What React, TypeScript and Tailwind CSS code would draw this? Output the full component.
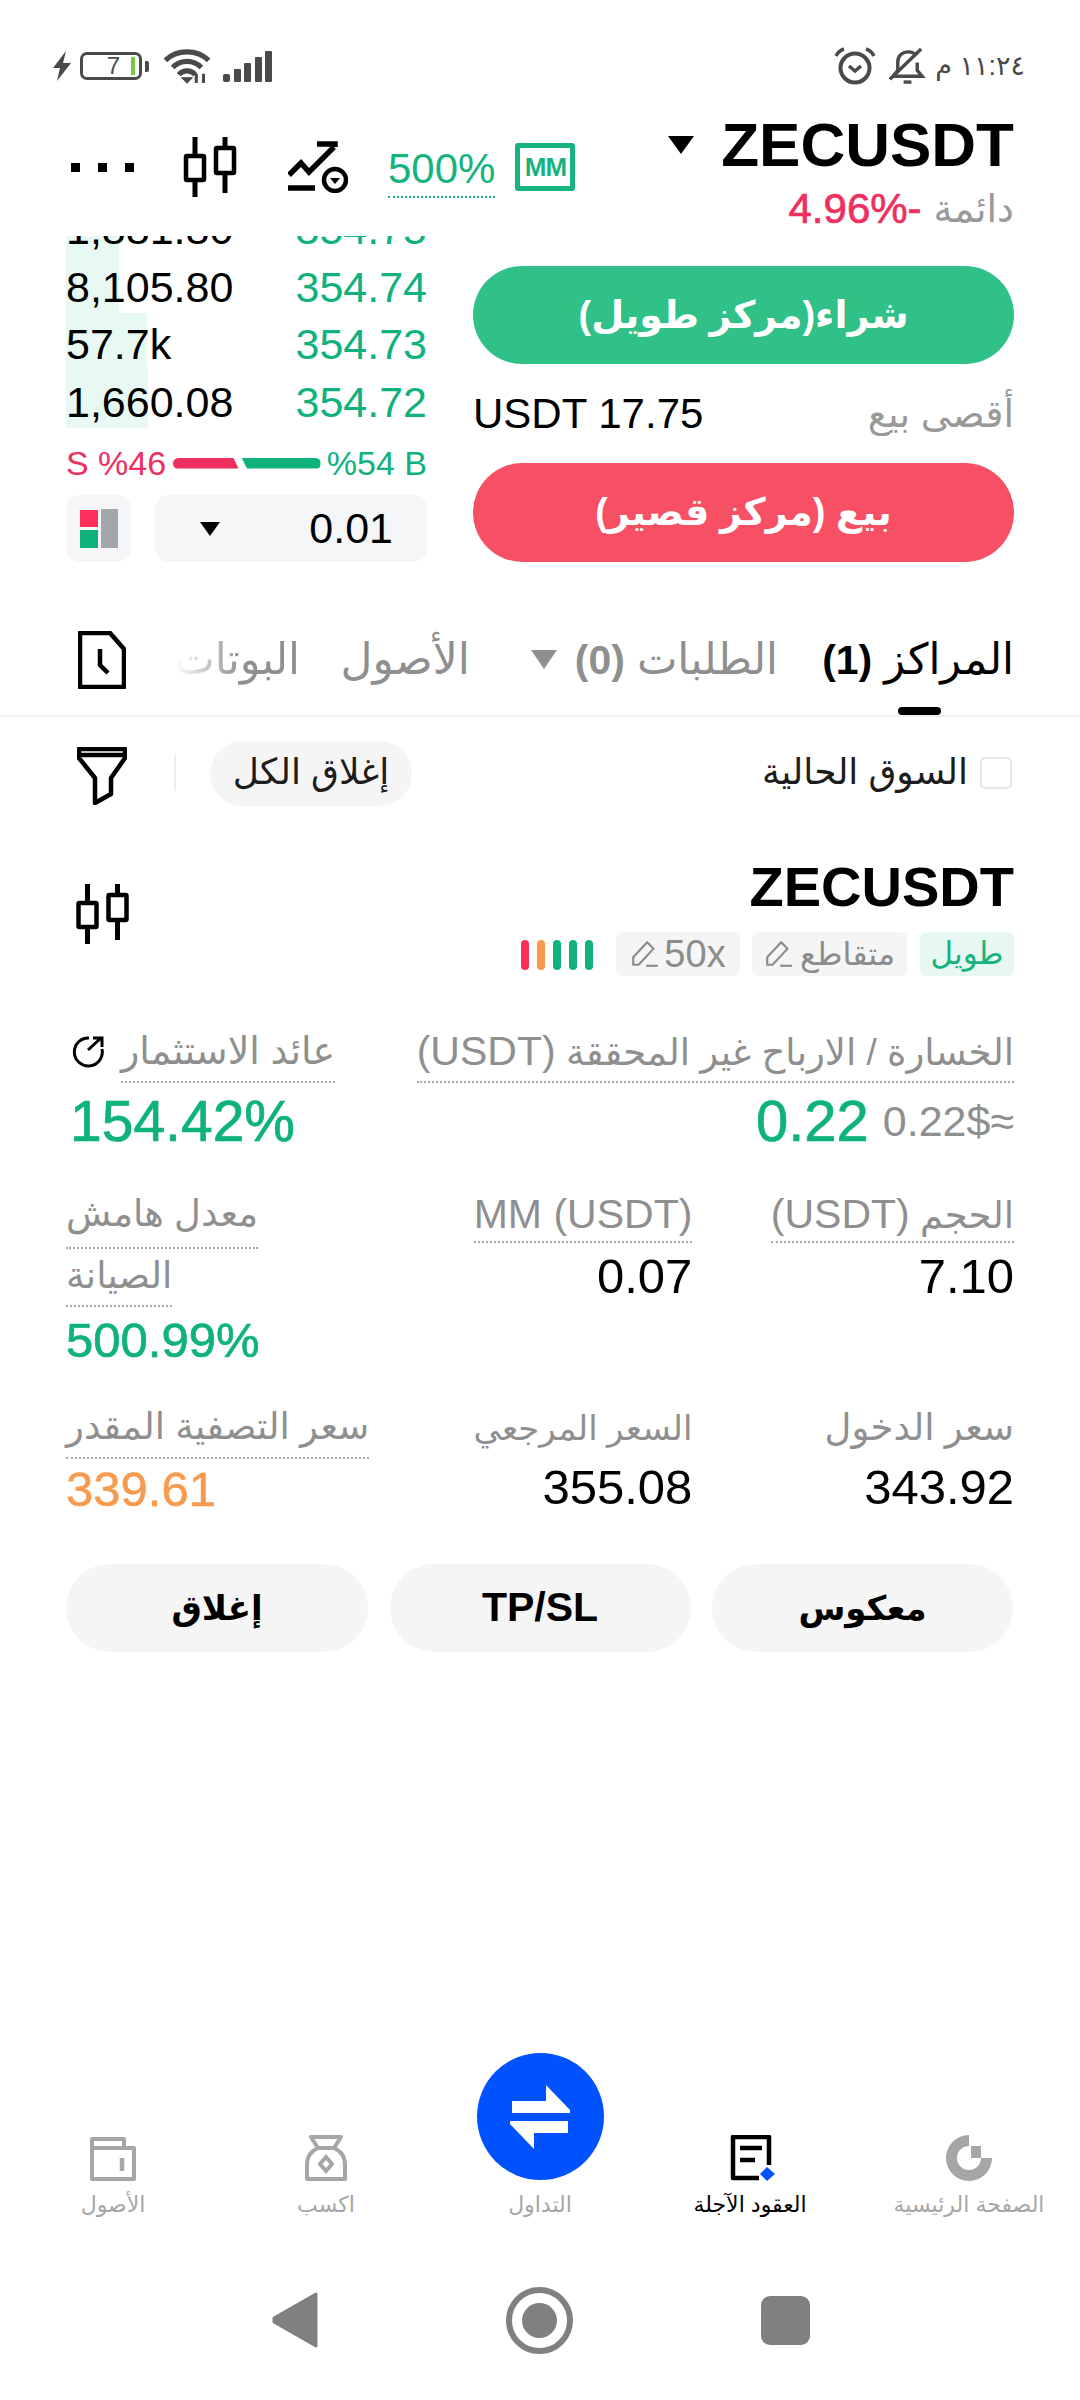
import React from "react";

const Candles = ({ className }: { className: string }) => (
  <svg viewBox="0 0 54 60" className={className} fill="none" stroke="#000" strokeWidth="4.5">
    <path d="M12 0V18M12 42V60M42 0V10M42 35V56" strokeWidth="5" />
    <rect x="3" y="19" width="18" height="24" rx="1" />
    <rect x="33" y="11" width="18" height="25" rx="1" />
  </svg>
);

const Tag = ({ children, className }: { children: React.ReactNode; className: string }) => (
  <div className={`h-[44px] rounded-[6px] flex items-center justify-center ${className}`}>{children}</div>
);

const Pen = () => (
  <svg viewBox="0 0 28 28" className="w-[30px] h-[30px]" fill="none" stroke="#8c8c8c" strokeWidth="2">
    <path d="M3 24V17L16 3L22 9L8 24H3Z" strokeLinejoin="round" />
    <path d="M15 25H26" />
  </svg>
);

const Label = ({ children, className = "" }: { children: React.ReactNode; className?: string }) => (
  <span className={`text-[37px] leading-none text-[#8f8f8f] border-b-2 border-dotted border-[#a8a8a8] whitespace-nowrap ${className}`}>
    {children}
  </span>
);

const Usdt = ({ text = "(USDT)" }: { text?: string }) => <span className="text-[41px] leading-none">{text}</span>;

const Book = ({ vol, price, bar }: { vol: string; price: string; bar: string }) => (
  <div className="relative h-[57.5px] flex items-center justify-between pt-[5px]">
    <div className={`absolute left-0 top-0 bottom-0 bg-[#e8f8f2] ${bar}`} />
    <span className="relative text-[43px] text-black">{vol}</span>
    <span className="relative text-[43px] text-[#0fb27c]">{price}</span>
  </div>
);

const NavItem = ({ label, width, icon, active }: { label: string; width: string; icon: React.ReactNode; active?: boolean }) => (
  <div className={`flex flex-col items-center shrink-0 ${width}`}>
    <div className="mb-[4px] flex">{icon}</div>
    <span className={`h-[43px] pb-[4px] flex items-center text-[22px] whitespace-nowrap ${active ? "text-black" : "text-[#a6a6a6]"}`}>{label}</span>
  </div>
);

export default function App() {
  return (
    <div className="w-[1080px] h-[2400px] bg-white flex flex-col overflow-hidden font-['Liberation_Sans','DejaVu_Sans',sans-serif]">
      {/* status bar */}
      <div className="h-[100px] pt-[32px] pl-[52px] pr-[55px] flex items-center justify-between">
        <div className="flex items-center">
          <svg viewBox="0 0 20 30" className="w-[20px] h-[30px]" fill="#4a4a4a"><path d="M14 0L1 17H8L5 30L19 12H11L14 0Z" /></svg>
          <div className="ml-[8px] w-[62px] h-[28px] rounded-[7px] border-[3px] border-[#4a4a4a] flex items-center justify-end pr-[4px] gap-[11px]">
            <span className="text-[24px] leading-none text-[#4a4a4a]">7</span>
            <span className="w-[4px] h-[18px] bg-[#7ac943]" />
          </div>
          <div className="ml-[3px] w-[4px] h-[11px] rounded-r-[2px] bg-[#4a4a4a]" />
          <svg viewBox="0 0 46 34" className="ml-[14px] w-[48px] h-[35px]" fill="none" stroke="#4a4a4a" strokeWidth="5">
            <path d="M2 11C13 0 33 0 44 11M9 18C17 10 29 10 37 18M15 25C19 20 27 20 31 25" />
            <path d="M23 33L18 28H28Z" fill="#4a4a4a" strokeWidth="1" />
            <path d="M32 24V33M39 24V33" strokeWidth="3" />
          </svg>
          <div className="ml-[12px] flex items-end gap-[3.5px] h-[32px]">
            <span className="w-[7px] h-[8px] bg-[#4a4a4a] rounded-[2px]" />
            <span className="w-[7px] h-[13px] bg-[#4a4a4a] rounded-[1px]" />
            <span className="w-[7px] h-[19px] bg-[#4a4a4a] rounded-[1px]" />
            <span className="w-[7px] h-[25px] bg-[#4a4a4a] rounded-[1px]" />
            <span className="w-[7px] h-[31px] bg-[#4a4a4a] rounded-[1px]" />
          </div>
        </div>
        <div className="flex items-center">
          <svg viewBox="0 0 42 38" className="w-[42px] h-[38px]" fill="none" stroke="#4a4a4a" strokeWidth="4">
            <circle cx="21" cy="21" r="14.5" />
            <path d="M15 19L21 24L27 19" strokeWidth="3.5" />
            <path d="M2 9C4 5 7 3 10 2M40 9C38 5 35 3 32 2" strokeWidth="3.5" />
          </svg>
          <svg viewBox="0 0 38 40" className="ml-[13px] w-[37px] h-[39px]" fill="none" stroke="#4a4a4a" strokeWidth="3.5">
            <path d="M4 30L9 24V15C9 9 14 5 20 5C23 5 26 6 28 9M29 16V24L34 30H4" />
            <path d="M1 33L33 2" />
            <path d="M15 36H23" strokeWidth="3.5" />
          </svg>
          <span dir="rtl" className="ml-[9px] text-[27px] leading-none text-[#4a4a4a] whitespace-nowrap">١١:٢٤ م</span>
        </div>
      </div>

      {/* market header */}
      <div className="h-[136px] pl-[71px] pr-[66px] flex justify-between">
        <div className="flex items-center h-[136px] pb-[2px]">
          <div className="flex gap-[18px] w-[112px]">
            <span className="w-[9px] h-[9px] bg-black" />
            <span className="w-[9px] h-[9px] bg-black" />
            <span className="w-[9px] h-[9px] bg-black" />
          </div>
          <Candles className="w-[54px] h-[60px]" />
          <svg viewBox="0 0 60 52" className="ml-[51px] w-[60px] h-[52px]" fill="none" stroke="#000" strokeWidth="5.5">
            <path d="M1 34L13 22L21 31L46 6M29 3H47V6" />
            <path d="M0 47H27" />
            <circle cx="47" cy="39" r="11" strokeWidth="4.5" />
            <path d="M42 37H52L47 43Z" fill="#000" stroke="none" />
          </svg>
          <span className="ml-[40px] text-[42px] leading-[46px] text-[#16b37e] border-b-2 border-dotted border-[#16b37e] pb-[4px] mt-[9px]">500%</span>
          <div className="ml-[20px] w-[60px] h-[48px] border-[5px] border-[#16b37e] rounded-[3px] flex items-center justify-center text-[26px] font-bold text-[#16b37e] leading-none tracking-[-1px]">
            MM
          </div>
        </div>
        <div className="flex flex-col items-end">
          <div className="flex items-center h-[68px] mt-[11px]">
            <span className="w-0 h-0 border-x-[13px] border-x-transparent border-t-[18px] border-t-black mr-[27px]" />
            <span className="text-[62px] leading-none font-bold text-black">ZECUSDT</span>
          </div>
          <div className="flex items-center h-[48px] mt-[6px]" dir="rtl">
            <span className="text-[38px] leading-none text-[#999]">دائمة</span>
            <span className="mr-[12px] text-[42px] leading-none text-[#ee2f5f] [-webkit-text-stroke:0.7px_#ee2f5f]" dir="ltr">4.96%-</span>
          </div>
        </div>
      </div>

      {/* order book and trade buttons */}
      <div className="h-[326px] px-[66px] flex justify-between">
        <div className="w-[361px] flex flex-col">
          <div className="h-[192px] overflow-hidden">
            <div className="-mt-[38px]">
              <Book vol="1,881.80" price="354.75" bar="w-[53px]" />
              <Book vol="8,105.80" price="354.74" bar="w-[53px]" />
              <Book vol="57.7k" price="354.73" bar="w-[81px]" />
              <Book vol="1,660.08" price="354.72" bar="w-[82px]" />
            </div>
          </div>
          <div className="mt-[17px] h-[36px] flex items-center justify-between">
            <span className="text-[34px] leading-none text-[#ee2f5f]">S %46</span>
            <div className="flex items-center">
              <span className="w-[66px] h-[11px] bg-[#ee2f5f] rounded-l-full [clip-path:polygon(0_0,92%_0,100%_100%,0_100%)]" />
              <span className="ml-[3px] w-[79px] h-[11px] bg-[#0fb27c] rounded-r-full [clip-path:polygon(0_0,100%_0,100%_100%,7%_100%)]" />
            </div>
            <span className="text-[34px] leading-none text-[#0fb27c]">%54 B</span>
          </div>
          <div className="mt-[14px] h-[67px] flex justify-between">
            <div className="w-[65px] h-[67px] rounded-[14px] bg-[#f5f6f7] flex items-center justify-center gap-[3px]">
              <div className="flex flex-col gap-[3px]">
                <span className="block w-[18px] h-[17px] bg-[#fb2f5a]" />
                <span className="block w-[18px] h-[18px] bg-[#0fb27c]" />
              </div>
              <span className="block w-[17px] h-[39px] bg-[#a3a6aa]" />
            </div>
            <div className="w-[272px] h-[67px] rounded-[14px] bg-[#f5f6f7] flex items-center justify-between pl-[45px] pr-[34px]">
              <span className="w-0 h-0 border-x-[10px] border-x-transparent border-t-[14px] border-t-black" />
              <span className="text-[43px] leading-none text-black">0.01</span>
            </div>
          </div>
        </div>
        <div className="w-[541px] flex flex-col pt-[30px]">
          <div dir="rtl" className="h-[98px] rounded-full bg-[#2fc187] flex items-center justify-center text-[38px] font-bold text-white">شراء(مركز طويل)</div>
          <div className="h-[99px] flex items-center justify-between">
            <span className="text-[42px] leading-none text-black">USDT 17.75</span>
            <span dir="rtl" className="text-[38px] leading-none text-[#999]">أقصى بيع</span>
          </div>
          <div dir="rtl" className="h-[99px] rounded-full bg-[#f74f63] flex items-center justify-center text-[38px] font-bold text-white">بيع (مركز قصير)</div>
        </div>
      </div>

      {/* tabs */}
      <div dir="rtl" className="relative h-[155px] pt-[69px] pr-[66px] pl-[78px] flex border-b-2 border-[#f0f0f0] shrink-0">
        <div className="h-[56px] flex items-center w-[236px] text-[43px] leading-none text-black whitespace-nowrap">
          <span>المراكز <span className="font-bold text-[41px]">(1)</span></span>
        </div>
        <div className="h-[56px] flex items-center w-[308px] text-[43px] leading-none text-[#8f8f8f] whitespace-nowrap">
          <span>الطلبات <span className="font-bold text-[41px]">(0)</span></span>
          <span className="mr-[18px] w-0 h-0 border-x-[13px] border-x-transparent border-t-[19px] border-t-[#8f8f8f]" />
        </div>
        <div className="h-[56px] flex items-center w-[173px] text-[44px] leading-none text-[#8f8f8f] whitespace-nowrap">الأصول</div>
        <div className="h-[56px] flex items-center w-[122px] pr-[4px] overflow-hidden text-[43px] leading-none whitespace-nowrap bg-linear-to-r from-[#ffffff] to-[#8f8f8f] to-[55%] bg-clip-text text-transparent">البوتات</div>
        <svg viewBox="0 0 48 58" className="absolute left-[78px] top-[69px] w-[48px] h-[58px]" fill="none" stroke="#000" strokeWidth="4.5">
          <path d="M2 2H32L46 18V56H2Z" strokeLinejoin="round" />
          <path d="M22 18V34L30 42" />
        </svg>
        <span className="absolute right-[139px] bottom-0 w-[43px] h-[8px] bg-black rounded-full" />
      </div>

      {/* filter row */}
      <div dir="rtl" className="h-[112px] pr-[68px] pl-[77px] flex items-center shrink-0">
        <span className="w-[32px] h-[32px] rounded-[5px] border-2 border-[#e8e8e8]" />
        <span className="mr-[12px] pb-[3px] text-[36px] leading-none text-[#1c1c1c] whitespace-nowrap">السوق الحالية</span>
        <div className="flex-1" />
        <div className="w-[202px] h-[65px] pb-[3px] rounded-full bg-[#f5f5f5] flex items-center justify-center text-[36px] text-[#1c1c1c] whitespace-nowrap">إغلاق الكل</div>
        <span className="mr-[34px] w-[2px] h-[36px] bg-[#eeeeee]" />
        <svg viewBox="0 0 50 58" className="mr-[47px] mt-[5px] w-[50px] h-[58px]" fill="none" stroke="#000" strokeWidth="4.5">
          <path d="M2 2H48V11L34 31V47L18 56V31L2 11Z" strokeLinejoin="round" />
          <path d="M2 8H48" />
        </svg>
      </div>

      {/* position card */}
      <div className="pl-[75px] pr-[66px] flex justify-between items-center mt-[28px] shrink-0">
        <Candles className="w-[55px] h-[60px] mb-[6px]" />
        <div className="flex flex-col items-end">
          <span className="h-[60px] flex items-center text-[56px] leading-none font-bold text-black">ZECUSDT</span>
          <div dir="rtl" className="mt-[15px] flex items-center">
            <Tag className="w-[94px] bg-[#e7f8f2] text-[#16b37e] text-[31px]">طويل</Tag>
            <Tag className="mr-[13px] w-[155px] bg-[#f5f5f5] text-[#8c8c8c] text-[32px] gap-[6px]"><span>متقاطع</span><Pen /></Tag>
            <Tag className="mr-[12px] w-[124px] bg-[#f5f5f5] text-[#8c8c8c] text-[38px] gap-[4px]"><span dir="ltr">50x</span><Pen /></Tag>
            <div dir="ltr" className="mr-[23px] flex gap-[8px] h-[30px] mb-[-2px]">
              <span className="w-[8px] h-[30px] rounded-full bg-[#fb2f5a]" />
              <span className="w-[8px] h-[30px] rounded-full bg-[#f89a4d]" />
              <span className="w-[8px] h-[30px] rounded-full bg-[#0fb27c]" />
              <span className="w-[8px] h-[30px] rounded-full bg-[#0fb27c]" />
              <span className="w-[8px] h-[30px] rounded-full bg-[#0fb27c]" />
            </div>
          </div>
        </div>
      </div>

      {/* metrics */}
      <div dir="rtl" className="mt-[45px] pl-[66px] pr-[66px] grid grid-cols-3 gap-x-[17px] shrink-0">
        <div className="col-span-2 flex flex-col items-start">
          <div className="h-[62px] flex items-center">
            <Label className="h-[62px] flex items-center">
              <span>الخسارة / الارباح غير المحققة <Usdt /></span>
            </Label>
          </div>
          <div className="h-[76px] flex items-center">
            <span dir="ltr" className="text-[43px] leading-none text-[#8f8f8f]">0.22$≈</span>
            <span className="mr-[14px] text-[58px] leading-none text-[#0fb27c] [-webkit-text-stroke:0.7px_#0fb27c]">0.22</span>
          </div>
        </div>
        <div className="flex flex-col items-end">
          <div className="h-[62px] flex items-center pl-[6px]">
            <Label className="h-[62px] flex items-center text-[38px]">عائد الاستثمار</Label>
            <svg viewBox="0 0 34 34" className="mr-[15px] w-[34px] h-[34px] order-1" fill="none" stroke="#000" strokeWidth="3">
              <path d="M17 3A14 14 0 1 0 30 14" />
              <path d="M16 15L29 3M21 3H30V12" strokeWidth="3" />
            </svg>
          </div>
          <div className="h-[76px] flex items-center pl-[4px]">
            <span dir="ltr" className="text-[57px] leading-none text-[#0fb27c] [-webkit-text-stroke:0.7px_#0fb27c]">154.42%</span>
          </div>
        </div>

        <div className="mt-[28px] flex flex-col items-start">
          <Label className="h-[56px] flex items-center"><span>الحجم <Usdt /></span></Label>
          <span className="h-[66px] flex items-center text-[49px] leading-none text-black">7.10</span>
        </div>
        <div className="mt-[28px] flex flex-col items-start">
          <Label className="h-[56px] flex items-center"><Usdt text="MM (USDT)" /></Label>
          <span className="h-[66px] flex items-center text-[49px] leading-none text-black">0.07</span>
        </div>
        <div className="mt-[28px] flex flex-col items-end">
          <Label className="h-[62px] pb-[7px] flex items-center">معدل هامش</Label>
          <Label className="h-[58px] pb-[3px] flex items-center">الصيانة</Label>
          <span dir="ltr" className="h-[66px] flex items-center text-[49px] leading-none text-[#0fb27c] [-webkit-text-stroke:0.7px_#0fb27c]">500.99%</span>
        </div>

        <div className="mt-[26px] flex flex-col items-start">
          <span className="h-[60px] pb-[3px] flex items-center text-[37px] leading-none text-[#8f8f8f]">سعر الدخول</span>
          <span className="h-[56px] flex items-center text-[49px] leading-none text-black">343.92</span>
        </div>
        <div className="mt-[26px] flex flex-col items-start">
          <span className="h-[60px] pb-[3px] flex items-center text-[34px] leading-none text-[#8f8f8f]">السعر المرجعي</span>
          <span className="h-[56px] flex items-center text-[49px] leading-none text-black">355.08</span>
        </div>
        <div className="mt-[26px] flex flex-col items-end">
          <Label className="h-[60px] pb-[3px] flex items-center text-[36px]">سعر التصفية المقدر</Label>
          <span className="h-[60px] flex items-center text-[49px] leading-none text-[#f89a4d] [-webkit-text-stroke:0.5px_#f89a4d]">339.61</span>
        </div>
      </div>

      {/* action buttons */}
      <div dir="rtl" className="mt-[45px] pl-[66px] pr-[67px] flex justify-between shrink-0">
        <div className="w-[301px] h-[88px] rounded-full bg-[#f5f5f5] flex items-center justify-center text-[34px] font-bold text-black">معكوس</div>
        <div className="w-[301px] h-[88px] rounded-full bg-[#f5f5f5] flex items-center justify-center text-[41px] font-bold text-black">TP/SL</div>
        <div className="w-[302px] h-[88px] rounded-full bg-[#f5f5f5] flex items-center justify-center text-[34px] font-bold text-black">إغلاق</div>
      </div>

      <div className="flex-1" />

      {/* bottom navigation */}
      <div className="h-[175px] pl-[8px] flex items-end shrink-0">
        <NavItem
          label="الأصول"
          width="w-[210px]"
          icon={
            <svg viewBox="0 0 46 44" className="w-[46px] h-[44px]" fill="none" stroke="#a6a6a6" strokeWidth="4">
              <path d="M2 2H34V11H44V42H2Z" strokeLinejoin="round" />
              <path d="M2 11H34" />
              <path d="M32 21V34" strokeWidth="4.5" />
            </svg>
          }
        />
        <NavItem
          label="اكسب"
          width="w-[216px]"
          icon={
            <svg viewBox="0 0 44 46" className="w-[44px] h-[46px]" fill="none" stroke="#a6a6a6" strokeWidth="4">
              <path d="M7 2H37L30 13H14L7 2Z" strokeLinejoin="round" />
              <path d="M14 13C7 16 3 22 3 30V44H41V30C41 22 37 16 30 13" strokeLinejoin="round" />
              <path d="M22 22L28 29L22 36L16 29Z" />
            </svg>
          }
        />
        <div className="w-[212px] shrink-0 flex flex-col items-center">
          <div className="w-[127px] h-[127px] rounded-full bg-[#0052fe] flex items-center justify-center">
            <svg viewBox="0 0 60 64" className="w-[60px] h-[64px]" fill="#fff">
              <path d="M36 0L60 25V28H2V16H36Z" />
              <path d="M0 36H58V48H24V64L0 39Z" />
            </svg>
          </div>
          <span className="h-[48px] flex items-center text-[22px] text-[#a6a6a6] whitespace-nowrap">التداول</span>
        </div>
        <NavItem
          active
          label="العقود الآجلة"
          width="w-[208px]"
          icon={
            <svg viewBox="0 0 48 46" className="w-[48px] h-[46px] ml-[6px]" fill="none" stroke="#000" strokeWidth="4.5">
              <path d="M40 30V2H4V43H30" strokeLinejoin="round" />
              <path d="M11 13H33M11 25H26" />
              <path d="M38 32L46 39L38 46L31 39Z" fill="#0052fe" stroke="none" />
            </svg>
          }
        />
        <NavItem
          label="الصفحة الرئيسية"
          width="w-[230px]"
          icon={
            <svg viewBox="0 0 46 46" className="w-[46px] h-[46px]" fill="none">
              <path d="M23 0V11A12 12 0 1 0 35 23H46A23 23 0 1 1 23 0Z" fill="#a6a6a6" />
              <path d="M25 11H35V23H25Z" fill="#a6a6a6" />
            </svg>
          }
        />
      </div>

      {/* android navigation */}
      <div className="h-[172px] pt-[12px] pl-[272px] flex items-center shrink-0">
        <svg viewBox="0 0 46 58" className="w-[46px] h-[58px]" fill="#808080"><path d="M44 3V55L2 31V27Z" stroke="#808080" strokeWidth="3" strokeLinejoin="round" /></svg>
        <div className="ml-[188px] w-[67px] h-[67px] rounded-full border-[6px] border-[#808080] flex items-center justify-center">
          <span className="w-[35px] h-[35px] rounded-full bg-[#808080]" />
        </div>
        <span className="ml-[188px] w-[49px] h-[49px] rounded-[9px] bg-[#808080]" />
      </div>
    </div>
  );
}
